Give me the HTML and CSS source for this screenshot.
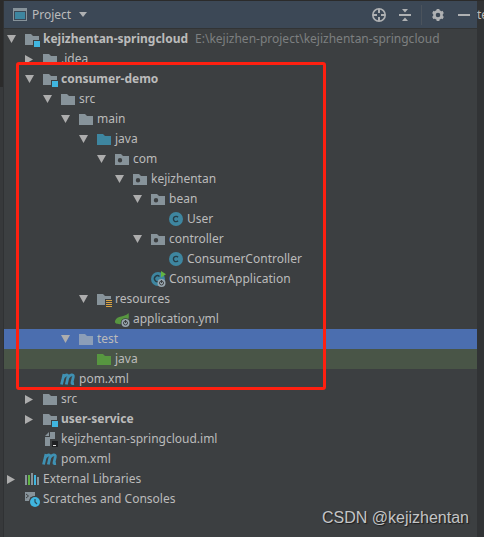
FILE: index.html
```html
<!DOCTYPE html>
<html lang="en">
  <head>
    <meta charset="UTF-8" />
    <meta name="viewport" content="width=device-width, initial-scale=1.0" />
    <title>Project</title>
    <link rel="stylesheet" href="styles.css">
  </head>
  <body>
    <!-- shared icons -->
    <svg class="sprite" aria-hidden="true">
      <symbol id="down" viewBox="0 0 16 16"><path fill="#adadad" d="M3 4h9L7.500 12z" /></symbol>
      <symbol id="right" viewBox="0 0 16 16"><path fill="#adadad" d="M3 4v9l8-4.500z" /></symbol>
      <symbol id="folder" viewBox="0 0 16 16"><path fill="currentColor" d="M1 3h6l2 2h6v9H1z" /></symbol>
      <symbol id="module" viewBox="0 0 16 16">
        <path fill="currentColor" d="M1 3h6l2 2h6v4H9v5H1z" />
        <path fill="#40b6e0" d="M10 10h6v6h-6z" />
      </symbol>
      <symbol id="package" viewBox="0 0 16 16">
        <path fill="currentColor" fill-rule="evenodd" d="M1 3h6l2 2h6v9H1zM6 7a2.200 2.200 0 1 0 0 4.400A2.200 2.200 0 0 0 6 7z" />
      </symbol>
      <symbol id="resources" viewBox="0 0 16 16">
        <path fill="currentColor" d="M1 3h6l2 2h6v3H9v6H1z" />
        <path fill="#d9a343" d="M10 9h6v1h-6zM10 11h6v1h-6zM10 13h6v1h-6zM10 15h6v1h-6z" />
      </symbol>
      <symbol id="class" viewBox="0 0 16 16">
        <circle cx="8" cy="8" r="7" fill="#3e86a0" />
        <path fill="none" stroke="#263c46" stroke-width="1.400" d="M10 6.300a2.600 2.600 0 1 0 0 3.400" />
      </symbol>
      <symbol id="application" viewBox="0 0 16 16">
        <circle cx="8" cy="8" r="7" fill="#3e86a0" />
        <path fill="none" stroke="#263c46" stroke-width="1.400" d="M9.500 5.500a3 3 0 1 0-1 5" />
        <path fill="#62b543" d="M11 0l5 3.200-5 3.300z" />
        <circle cx="11.500" cy="12" r="4" fill="#9aa7b0" />
        <circle cx="11.500" cy="12" r="2" fill="none" stroke="#3c3f41" />
        <path stroke="#3c3f41" d="M11.500 9v3" />
      </symbol>
      <symbol id="spring" viewBox="0 0 16 16">
        <path fill="#579640" d="M14.500 2c1 5 0 10-6 11C4 13.500 0 13 1.200 9.500 3 4.500 11 6.500 14.500 2z" />
        <circle cx="11.500" cy="12" r="4.800" fill="#3c3f41" />
        <circle cx="11.500" cy="12" r="4" fill="#9aa7b0" />
        <circle cx="11.500" cy="12" r="2" fill="none" stroke="#3c3f41" />
        <path stroke="#3c3f41" d="M11.500 9v3" />
      </symbol>
      <symbol id="maven" viewBox="0 0 16 16">
        <path fill="none" stroke="#3f91b3" stroke-width="2.800" stroke-linejoin="round" d="M1.500 13.500L4 3M2.800 7.500C4 4 8.500 2.500 8 6L6.300 13.500M7.800 7C9.500 3.500 14 2.500 13.300 6L12 11.500c-.3 1.500.5 1.200 2 1" />
      </symbol>
      <symbol id="iml" viewBox="0 0 16 16">
        <path fill="#87939a" d="M8 1h5v7H8v7H3V6h5zM7 1v4H3z" />
        <path fill="#1f2022" d="M10 10h6v6h-6z" />
        <path fill="#e8e8e8" d="M11 14h3v1h-3z" />
      </symbol>
      <symbol id="libraries" viewBox="0 0 16 16">
        <path fill="#87939a" d="M1 4h2v10H1zM7 2h2v12H7zM13 6h2v8h-2z" />
        <path fill="#62b543" d="M4 4h2v10H4z" />
        <path fill="#40b6e0" d="M10 4h2v10h-2z" />
      </symbol>
      <symbol id="scratches" viewBox="0 0 16 16">
        <path fill="#87939a" d="M1 1h10v4a5.500 5.500 0 0 0-6 5H1z" />
        <path fill="none" stroke="#3c3f41" d="M2 3l2.500 2L2 7M6 7h3" />
        <circle cx="11" cy="11" r="5" fill="#40b6e0" />
        <path fill="none" stroke="#2b4b59" stroke-width="1.200" d="M11 8v3l2 2" />
      </symbol>
    </svg>

    <div class="ide">
      <div class="left-stripe"></div>

      <section class="project">
        <header class="toolbar">
          <button class="view-select">
            <svg class="icon" viewBox="0 0 16 16">
              <path fill="#87939a" d="M1 1h14v13H1z" />
              <path fill="#3c4856" d="M2 4h12v9H2z" />
              <path fill="#3e86a0" d="M3 5h10v7H3z" />
            </svg>
            <span>Project</span>
            <svg class="caret" viewBox="0 0 8 5"><path fill="#afb1b3" d="M0 0h8L4 5z" /></svg>
          </button>
          <div class="actions">
            <button aria-label="Locate">
              <svg class="icon" viewBox="0 0 16 16" fill="none" stroke="#afb1b3">
                <circle cx="8" cy="8" r="6.200" stroke-width="1.600" />
                <path stroke-width="2" d="M8 2v4M8 10v4M2 8h4M10 8h4" />
              </svg>
            </button>
            <button aria-label="Collapse all">
              <svg class="icon" viewBox="0 0 16 16" fill="#afb1b3">
                <path d="M2 7h12v2H2zM5 2h6L8 5.500zM8 10.500l3 3.500H5z" />
              </svg>
            </button>
            <span class="separator"></span>
            <button aria-label="Settings">
              <svg class="icon" viewBox="0 0 16 16" fill="none" stroke="#afb1b3">
                <circle cx="8" cy="8" r="3.600" stroke-width="2.600" />
                <path stroke-width="2.800" d="M8 2v2M8 12v2M2.800 5l1.700 1M11.500 10l1.700 1M2.800 11l1.700-1M11.500 6l1.700-1" />
              </svg>
            </button>
            <button aria-label="Hide">
              <svg class="icon" viewBox="0 0 16 16"><path fill="#afb1b3" d="M2 7h12v2H2z" /></svg>
            </button>
          </div>
        </header>

        <main class="tree-container">
          <ul class="tree">
            <li class="row">
              <svg class="icon arrow"><use href="#down" /></svg>
              <svg class="icon"><use href="#module" /></svg>
              <b>kejizhentan-springcloud</b>
              <span class="path">E:\kejizhen-project\kejizhentan-springcloud</span>
            </li>
            <li class="row depth-1">
              <svg class="icon arrow"><use href="#right" /></svg>
              <svg class="icon"><use href="#folder" /></svg>
              <span>.idea</span>
            </li>
            <li class="row depth-1">
              <svg class="icon arrow"><use href="#down" /></svg>
              <svg class="icon"><use href="#module" /></svg>
              <b>consumer-demo</b>
            </li>
            <li class="row depth-2">
              <svg class="icon arrow"><use href="#down" /></svg>
              <svg class="icon"><use href="#folder" /></svg>
              <span>src</span>
            </li>
            <li class="row depth-3">
              <svg class="icon arrow"><use href="#down" /></svg>
              <svg class="icon"><use href="#folder" /></svg>
              <span>main</span>
            </li>
            <li class="row depth-4">
              <svg class="icon arrow"><use href="#down" /></svg>
              <svg class="icon source"><use href="#folder" /></svg>
              <span>java</span>
            </li>
            <li class="row depth-5">
              <svg class="icon arrow"><use href="#down" /></svg>
              <svg class="icon"><use href="#package" /></svg>
              <span>com</span>
            </li>
            <li class="row depth-6">
              <svg class="icon arrow"><use href="#down" /></svg>
              <svg class="icon"><use href="#package" /></svg>
              <span>kejizhentan</span>
            </li>
            <li class="row depth-7">
              <svg class="icon arrow"><use href="#down" /></svg>
              <svg class="icon"><use href="#package" /></svg>
              <span>bean</span>
            </li>
            <li class="row leaf depth-8">
              <svg class="icon"><use href="#class" /></svg>
              <span>User</span>
            </li>
            <li class="row depth-7">
              <svg class="icon arrow"><use href="#down" /></svg>
              <svg class="icon"><use href="#package" /></svg>
              <span>controller</span>
            </li>
            <li class="row leaf depth-8">
              <svg class="icon"><use href="#class" /></svg>
              <span>ConsumerController</span>
            </li>
            <li class="row leaf depth-7">
              <svg class="icon"><use href="#application" /></svg>
              <span>ConsumerApplication</span>
            </li>
            <li class="row depth-4">
              <svg class="icon arrow"><use href="#down" /></svg>
              <svg class="icon"><use href="#resources" /></svg>
              <span>resources</span>
            </li>
            <li class="row leaf depth-5">
              <svg class="icon"><use href="#spring" /></svg>
              <span>application.yml</span>
            </li>
            <li class="row depth-3 selected">
              <svg class="icon arrow"><use href="#down" /></svg>
              <svg class="icon"><use href="#folder" /></svg>
              <span>test</span>
            </li>
            <li class="row leaf depth-4 test-root">
              <svg class="icon"><use href="#folder" /></svg>
              <span>java</span>
            </li>
            <li class="row leaf depth-2">
              <svg class="icon"><use href="#maven" /></svg>
              <span>pom.xml</span>
            </li>
            <li class="row depth-1">
              <svg class="icon arrow"><use href="#right" /></svg>
              <svg class="icon"><use href="#folder" /></svg>
              <span>src</span>
            </li>
            <li class="row depth-1">
              <svg class="icon arrow"><use href="#right" /></svg>
              <svg class="icon"><use href="#module" /></svg>
              <b>user-service</b>
            </li>
            <li class="row leaf depth-1">
              <svg class="icon"><use href="#iml" /></svg>
              <span>kejizhentan-springcloud.iml</span>
            </li>
            <li class="row leaf depth-1">
              <svg class="icon"><use href="#maven" /></svg>
              <span>pom.xml</span>
            </li>
            <li class="row">
              <svg class="icon arrow"><use href="#right" /></svg>
              <svg class="icon"><use href="#libraries" /></svg>
              <span>External Libraries</span>
            </li>
            <li class="row leaf">
              <svg class="icon"><use href="#scratches" /></svg>
              <span>Scratches and Consoles</span>
            </li>
          </ul>
          <div class="highlight"></div>
        </main>
      </section>

      <aside class="editor">te</aside>
    </div>

    <div class="watermark">CSDN @kejizhentan</div>
  </body>
</html>
```
FILE: styles.css
```css
* {
  box-sizing: border-box;
}

body {
  margin: 0;
  background-color: #3c3f41;
  color: #bbbbbb;
  font-family: 'Noto Sans', 'Open Sans', sans-serif;
  font-size: 12px;
  line-height: 20px;
}

button {
  display: flex;
  align-items: center;
  padding: 0;
  border: none;
  background: none;
  color: inherit;
  font: inherit;
  cursor: pointer;
}

.sprite {
  position: absolute;
  width: 0;
  height: 0;
}

.ide {
  display: flex;
  min-height: 100vh;
  border-top: 1px solid #2b2b2b;
}

/* side strips */
.left-stripe {
  width: 4px;
  background: linear-gradient(#2b2b2b 86px, #37393b 86px);
  border-right: 1px solid #303234;
}

.editor {
  width: 7px;
  padding-top: 4px;
  background-color: #313335;
  overflow: hidden;
}

.project {
  flex: 1;
  min-width: 0;
}

/* tool window header */
.toolbar {
  display: flex;
  justify-content: space-between;
  align-items: center;
  height: 28px;
  padding: 0 5px 0 8px;
  background-color: #3c4856;
  border-bottom: 1px solid #323435;
}

.view-select {
  gap: 4px;
}

.caret {
  width: 8px;
  height: 5px;
  margin-left: 4px;
}

.actions {
  display: flex;
  align-items: center;
  gap: 10px;
}

.separator {
  width: 1px;
  height: 20px;
  margin: 0 -2px;
  background-color: #4b535c;
}

.icon {
  flex: none;
  width: 16px;
  height: 16px;
}

/* file tree */
.tree-container {
  position: relative;
}

.tree {
  margin: 0;
  padding: 0;
  list-style: none;
}

.row {
  display: flex;
  align-items: center;
  gap: 3px;
  height: 20px;
  padding-left: calc(var(--depth, 0) * 18px);
  color: #bbbbbb;
  white-space: nowrap;
}

.row .icon {
  color: #87939a;
}

.row .arrow {
  margin-right: 1px;
}

.row.leaf {
  padding-left: calc(var(--depth, 0) * 18px + 20px);
}

.depth-1 {
  --depth: 1;
}

.depth-2 {
  --depth: 2;
}

.depth-3 {
  --depth: 3;
}

.depth-4 {
  --depth: 4;
}

.depth-5 {
  --depth: 5;
}

.depth-6 {
  --depth: 6;
}

.depth-7 {
  --depth: 7;
}

.depth-8 {
  --depth: 8;
}

.row .source {
  color: #3e86a0;
}

.selected {
  background-color: #4b6eaf;
}

.selected .icon {
  color: #8c9eb8;
}

.test-root {
  background-color: #495547;
}

.test-root .icon {
  color: #579640;
}

.path {
  margin-left: 4px;
  color: #7d7f80;
}

.highlight {
  position: absolute;
  top: 33px;
  left: 12px;
  width: 310px;
  height: 328px;
  border: 3px solid #ff2010;
  border-radius: 3px;
  pointer-events: none;
}

.watermark {
  position: absolute;
  right: 15px;
  bottom: 9px;
  color: #c4c5c6;
  font-family: 'Liberation Sans', sans-serif;
  font-size: 16px;
  text-shadow: 1px 1px 1px #1c1d1e;
}
```
